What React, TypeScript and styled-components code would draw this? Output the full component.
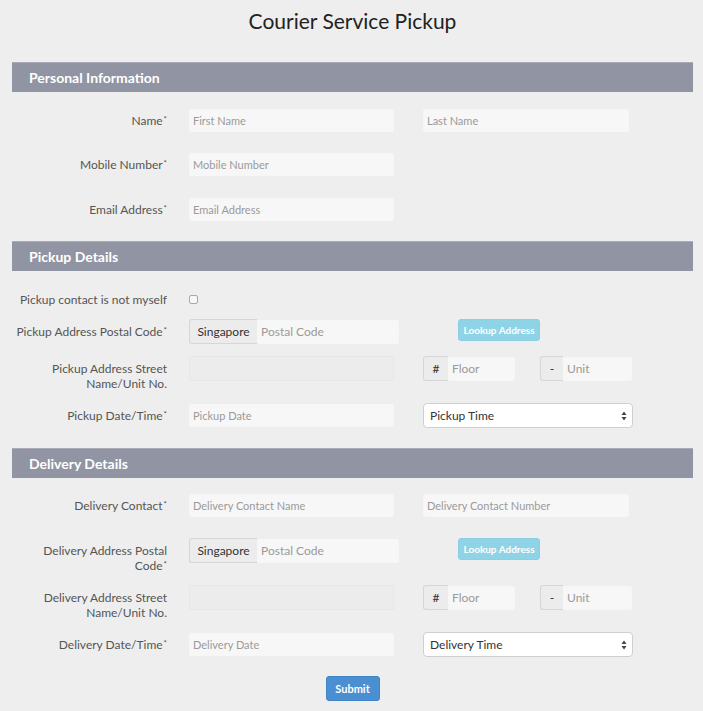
import React from "react";
import styled, { createGlobalStyle } from "styled-components";

const GlobalStyle = createGlobalStyle`
  html, body { margin: 0; padding: 0; background: #eeeeee; }
  body { font-family: Lato, "Open Sans", "Liberation Sans", sans-serif; color: #333; }
  * { box-sizing: border-box; }
`;

const Page = styled.div`
  padding: 0 10px 0 12px;
  width: 703px;
`;

const Title = styled.h1`
  margin: 0;
  height: 62px;
  padding-top: 8px;
  font-size: 21px;
  line-height: 26px;
  font-weight: 400;
  text-align: center;
  color: #222;
`;

const SectionHeader = styled.div`
  height: 30px;
  background: #9195a3;
  border-top: 1px solid #a9acb7;
  color: #fff;
  font-weight: 700;
  font-size: 14px;
  padding-left: 17px;
  display: flex;
  align-items: center;
`;

const SectionBody = styled.div<{ $top: number; $bottom: number }>`
  padding-top: ${(p) => p.$top}px;
  padding-bottom: ${(p) => p.$bottom}px;
`;

const Row = styled.div<{ $h: number; $mt?: number }>`
  display: flex;
  align-items: flex-start;
  height: ${(p) => p.$h}px;
  margin-top: ${(p) => p.$mt ?? 0}px;
`;

const Label = styled.div<{ $h: number }>`
  width: 152px;
  margin-left: 3px;
  margin-right: 22px;
  flex: none;
  text-align: right;
  font-size: 12px;
  line-height: 15px;
  color: #555;
  padding-top: ${(p) => (p.$h - 15) / 2}px;
`;

const Star = styled.span`
  font-size: 8px;
  line-height: 8px;
  vertical-align: 3px;
  margin-left: 1px;
`;

const Fields = styled.div<{ $h: number }>`
  display: flex;
  align-items: center;
  height: ${(p) => p.$h}px;
`;

const TextInput = styled.input<{ $w: number; $ml?: number }>`
  width: ${(p) => p.$w}px;
  margin-left: ${(p) => p.$ml ?? 0}px;
  height: 23px;
  border: 1px solid #f6f6f6;
  border-radius: 2px;
  background: #f7f7f7;
  padding: 0 3px;
  font-family: inherit;
  font-size: 11px;
  color: #333;
  outline: none;
  &::placeholder { color: #9a9a9a; }
  &:disabled { background: #ececec; border-color: #e7e7e7; height: 25px; }
`;

const Group = styled.div<{ $w: number; $ml?: number }>`
  display: flex;
  align-items: center;
  width: ${(p) => p.$w}px;
  margin-left: ${(p) => p.$ml ?? 0}px;
  height: 25px;
`;

const Addon = styled.span<{ $w: number }>`
  flex: none;
  width: ${(p) => p.$w}px;
  height: 25px;
  display: flex;
  align-items: center;
  justify-content: center;
  background: #ececec;
  border: 1px solid #d6d6d6;
  border-right: none;
  border-radius: 3px 0 0 3px;
  font-size: 12px;
  color: #333;
`;

const GroupInput = styled.input`
  flex: 1;
  min-width: 0;
  height: 24px;
  border: 1px solid #f6f6f6;
  border-radius: 0 2px 2px 0;
  background: #f7f7f7;
  padding: 0 3px;
  font-family: inherit;
  font-size: 12px;
  outline: none;
  &::placeholder { color: #9a9a9a; }
`;

const LookupButton = styled.button<{ $ml: number }>`
  margin-left: ${(p) => p.$ml}px;
  align-self: flex-start;
  width: 82px;
  height: 22px;
  border: 1px solid #8ccfe2;
  border-radius: 3px;
  background: #8fd3e6;
  color: #fff;
  font-family: inherit;
  font-weight: 700;
  font-size: 10px;
  padding: 0;
`;

const Check = styled.input`
  appearance: none;
  margin: 0;
  width: 9px;
  height: 9px;
  border: 1px solid #a8a8a8;
  border-radius: 2px;
  background: #f6f6f6;
`;

const SelectBox = styled.div<{ $ml: number }>`
  margin-left: ${(p) => p.$ml}px;
  width: 210px;
  height: 25px;
  background: #fff;
  border: 1px solid #cfcfcf;
  border-radius: 4px;
  display: flex;
  align-items: center;
  justify-content: space-between;
  padding: 0 5px 0 6px;
  font-size: 12px;
  color: #333;
`;

const SubmitRow = styled.div`
  display: flex;
  justify-content: center;
  padding-top: 19px;
  padding-bottom: 10px;
`;

const SubmitButton = styled.button`
  width: 54px;
  height: 25px;
  border: 1px solid #3e83c4;
  border-radius: 3px;
  background: #4a8fd1;
  color: #fff;
  font-family: inherit;
  font-weight: 700;
  font-size: 11px;
  padding: 0;
`;

const Req = () => <Star>*</Star>;

const Arrows = () => (
  <svg width="6" height="10" viewBox="0 0 6 10">
    <path d="M3 0.5 L5.5 4 L0.5 4 Z" fill="#444" />
    <path d="M3 9.5 L5.5 6 L0.5 6 Z" fill="#444" />
  </svg>
);

const Select = ({ label }: { label: string }) => (
  <SelectBox $ml={29}>
    <span>{label}</span>
    <Arrows />
  </SelectBox>
);

const PostalRow = ({ label, mt }: { label: React.ReactNode; mt: number }) => (
  <Row $h={25} $mt={mt}>
    <Label $h={25}>{label}</Label>
    <Fields $h={25}>
      <Group $w={210}>
        <Addon $w={68}>Singapore</Addon>
        <GroupInput placeholder="Postal Code" />
      </Group>
      <LookupButton $ml={59}>Lookup Address</LookupButton>
    </Fields>
  </Row>
);

const StreetRow = ({ label, mt }: { label: React.ReactNode; mt: number }) => (
  <Row $h={25} $mt={mt}>
    <Label $h={25}>{label}</Label>
    <Fields $h={25}>
      <TextInput $w={205} disabled />
      <Group $w={92} $ml={29}>
        <Addon $w={25}>#</Addon>
        <GroupInput placeholder="Floor" />
      </Group>
      <Group $w={92} $ml={25}>
        <Addon $w={23}>-</Addon>
        <GroupInput placeholder="Unit" />
      </Group>
    </Fields>
  </Row>
);

export default function App() {
  return (
    <Page>
      <GlobalStyle />
      <Title>Courier Service Pickup</Title>

      <SectionHeader>Personal Information</SectionHeader>
      <SectionBody $top={17} $bottom={20}>
        <Row $h={23}>
          <Label $h={23}>Name<Req /></Label>
          <Fields $h={23}>
            <TextInput $w={205} placeholder="First Name" />
            <TextInput $w={206} $ml={29} placeholder="Last Name" />
          </Fields>
        </Row>
        <Row $h={23} $mt={21}>
          <Label $h={23}>Mobile Number<Req /></Label>
          <Fields $h={23}>
            <TextInput $w={205} placeholder="Mobile Number" />
          </Fields>
        </Row>
        <Row $h={23} $mt={22}>
          <Label $h={23}>Email Address<Req /></Label>
          <Fields $h={23}>
            <TextInput $w={205} placeholder="Email Address" />
          </Fields>
        </Row>
      </SectionBody>

      <SectionHeader>Pickup Details</SectionHeader>
      <SectionBody $top={20} $bottom={20}>
        <Row $h={16}>
          <Label $h={16}>Pickup contact is not myself</Label>
          <Fields $h={16}>
            <Check type="checkbox" />
          </Fields>
        </Row>
        <PostalRow mt={12} label={<>Pickup Address Postal Code<Req /></>} />
        <StreetRow mt={12} label="Pickup Address Street Name/Unit No." />
        <Row $h={25} $mt={22}>
          <Label $h={25}>Pickup Date/Time<Req /></Label>
          <Fields $h={25}>
            <TextInput $w={205} placeholder="Pickup Date" />
            <Select label="Pickup Time" />
          </Fields>
        </Row>
      </SectionBody>

      <SectionHeader>Delivery Details</SectionHeader>
      <SectionBody $top={16} $bottom={0}>
        <Row $h={23}>
          <Label $h={23}>Delivery Contact<Req /></Label>
          <Fields $h={23}>
            <TextInput $w={205} placeholder="Delivery Contact Name" />
            <TextInput $w={206} $ml={29} placeholder="Delivery Contact Number" />
          </Fields>
        </Row>
        <PostalRow
          mt={21}
          label={
            <>
              Delivery Address Postal
              <br />
              Code<Req />
            </>
          }
        />
        <StreetRow mt={22} label="Delivery Address Street Name/Unit No." />
        <Row $h={25} $mt={22}>
          <Label $h={25}>Delivery Date/Time<Req /></Label>
          <Fields $h={25}>
            <TextInput $w={205} placeholder="Delivery Date" />
            <Select label="Delivery Time" />
          </Fields>
        </Row>
        <SubmitRow>
          <SubmitButton>Submit</SubmitButton>
        </SubmitRow>
      </SectionBody>
    </Page>
  );
}
